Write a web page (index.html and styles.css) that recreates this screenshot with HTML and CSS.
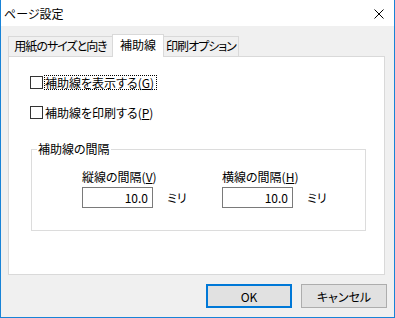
FILE: index.html
```html
<!DOCTYPE html>
<html lang="ja">
<head>
    <meta charset="UTF-8">
    <title>ページ設定</title>
    <link rel="stylesheet" href="styles.css">
</head>
<body>
    <div class="window">
        <div class="titlebar">
            <span class="title">ページ設定</span>
            <svg class="close" width="10" height="10" viewBox="0 0 10 10">
                <path d="M0.5 0.5 L9.5 9.5 M9.5 0.5 L0.5 9.5" stroke="#000" stroke-width="1" fill="none"/>
            </svg>
        </div>
        <div class="dialog">
            <div class="tabs">
                <div class="tab first">用紙のサイズと向き</div>
                <div class="tab active">補助線</div>
                <div class="tab last">印刷オプション</div>
            </div>
            <div class="panel">
                <div class="check">
                    <span class="box"></span>
                    <span class="label focus">補助線を表示する(<u>G</u>)</span>
                </div>
                <div class="check second">
                    <span class="box"></span>
                    <span class="label">補助線を印刷する(<u>P</u>)</span>
                </div>
                <fieldset class="group">
                    <legend>補助線の間隔</legend>
                    <div class="fields">
                        <div class="field">
                            <div class="caption">縦線の間隔(<u>V</u>)</div>
                            <div class="row">
                                <div class="input">10.0</div>
                                <span class="unit">ミリ</span>
                            </div>
                        </div>
                        <div class="field">
                            <div class="caption">横線の間隔(<u>H</u>)</div>
                            <div class="row">
                                <div class="input">10.0</div>
                                <span class="unit">ミリ</span>
                            </div>
                        </div>
                    </div>
                </fieldset>
            </div>
            <div class="buttons">
                <button class="btn default">OK</button>
                <button class="btn">キャンセル</button>
            </div>
        </div>
    </div>
</body>
</html>
```

FILE: styles.css
```css
* {
    box-sizing: border-box;
}
body {
    margin: 0;
    font-family: "Noto Sans CJK JP", "Noto Sans", sans-serif;
    font-size: 12px;
    font-feature-settings: "palt";
    color: #000;
    white-space: nowrap;
}
.window {
    width: 395px;
    height: 318px;
    border: 1px solid #1883d7;
    border-top: none;
    background-color: #f0f0f0;
    display: flex;
    flex-direction: column;
}
.titlebar {
    height: 26px;
    background-color: #fff;
    display: flex;
    align-items: center;
    justify-content: space-between;
    padding: 1px 10px 0 3px;
}
.title {
    line-height: 14px;
}
.close {
    display: block;
}
.dialog {
    flex: 1;
    padding: 8px 9px 0 7px;
    display: flex;
    flex-direction: column;
}
.tabs {
    display: flex;
    align-items: flex-end;
    height: 22px;
    position: relative;
    z-index: 1;
}
.tab {
    height: 20px;
    border: 1px solid #d9d9d9;
    border-bottom: none;
    background-color: #f0f0f0;
    text-align: center;
    line-height: 18px;
    letter-spacing: -1px;
}
.tab.first {
    width: 104px;
    border-right: none;
}
.tab.active {
    width: 52px;
    height: 23px;
    margin-bottom: -1px;
    background-color: #fff;
    line-height: 20px;
    letter-spacing: 0;
}
.tab.last {
    width: 75px;
    border-left: none;
}
.panel {
    height: 219px;
    background-color: #fff;
    border: 1px solid #d9d9d9;
    padding: 18px 0 0 21px;
}
.check {
    display: flex;
    align-items: center;
    height: 15px;
}
.check.second {
    margin-top: 15px;
}
.box {
    width: 13px;
    height: 13px;
    border: 1px solid #333;
    background-color: #fff;
    margin-right: 1px;
}
.label {
    line-height: 13px;
    padding: 0 2px 0 0;
    border: 1px solid transparent;
}
.label.focus {
    border: 1px dotted #000;
}
.group {
    margin: 21px 0 0 1px;
    width: 335px;
    border: 1px solid #dcdcdc;
    padding: 0;
}
.group legend {
    margin-left: 5px;
    padding: 0 1px;
    line-height: 16px;
}
.fields {
    display: flex;
    padding: 13px 0 22px 50px;
}
.field {
    width: 140px;
}
.caption {
    line-height: 14px;
    margin-bottom: 3px;
}
.row {
    display: flex;
    align-items: center;
}
.input {
    width: 71px;
    height: 21px;
    border: 1px solid #7a7a7a;
    background-color: #fff;
    text-align: right;
    padding-right: 4px;
    line-height: 19px;
}
.unit {
    margin-left: 14px;
}
.buttons {
    display: flex;
    justify-content: flex-end;
    gap: 9px;
    margin-top: 9px;
    margin-right: -2px;
}
.btn {
    width: 86px;
    height: 24px;
    padding: 0;
    border: 1px solid #adadad;
    background-color: #e1e1e1;
    font-family: inherit;
    font-size: 12px;
    font-feature-settings: "palt";
    color: #000;
}
.btn.default {
    border: 2px solid #0078d7;
}
```
